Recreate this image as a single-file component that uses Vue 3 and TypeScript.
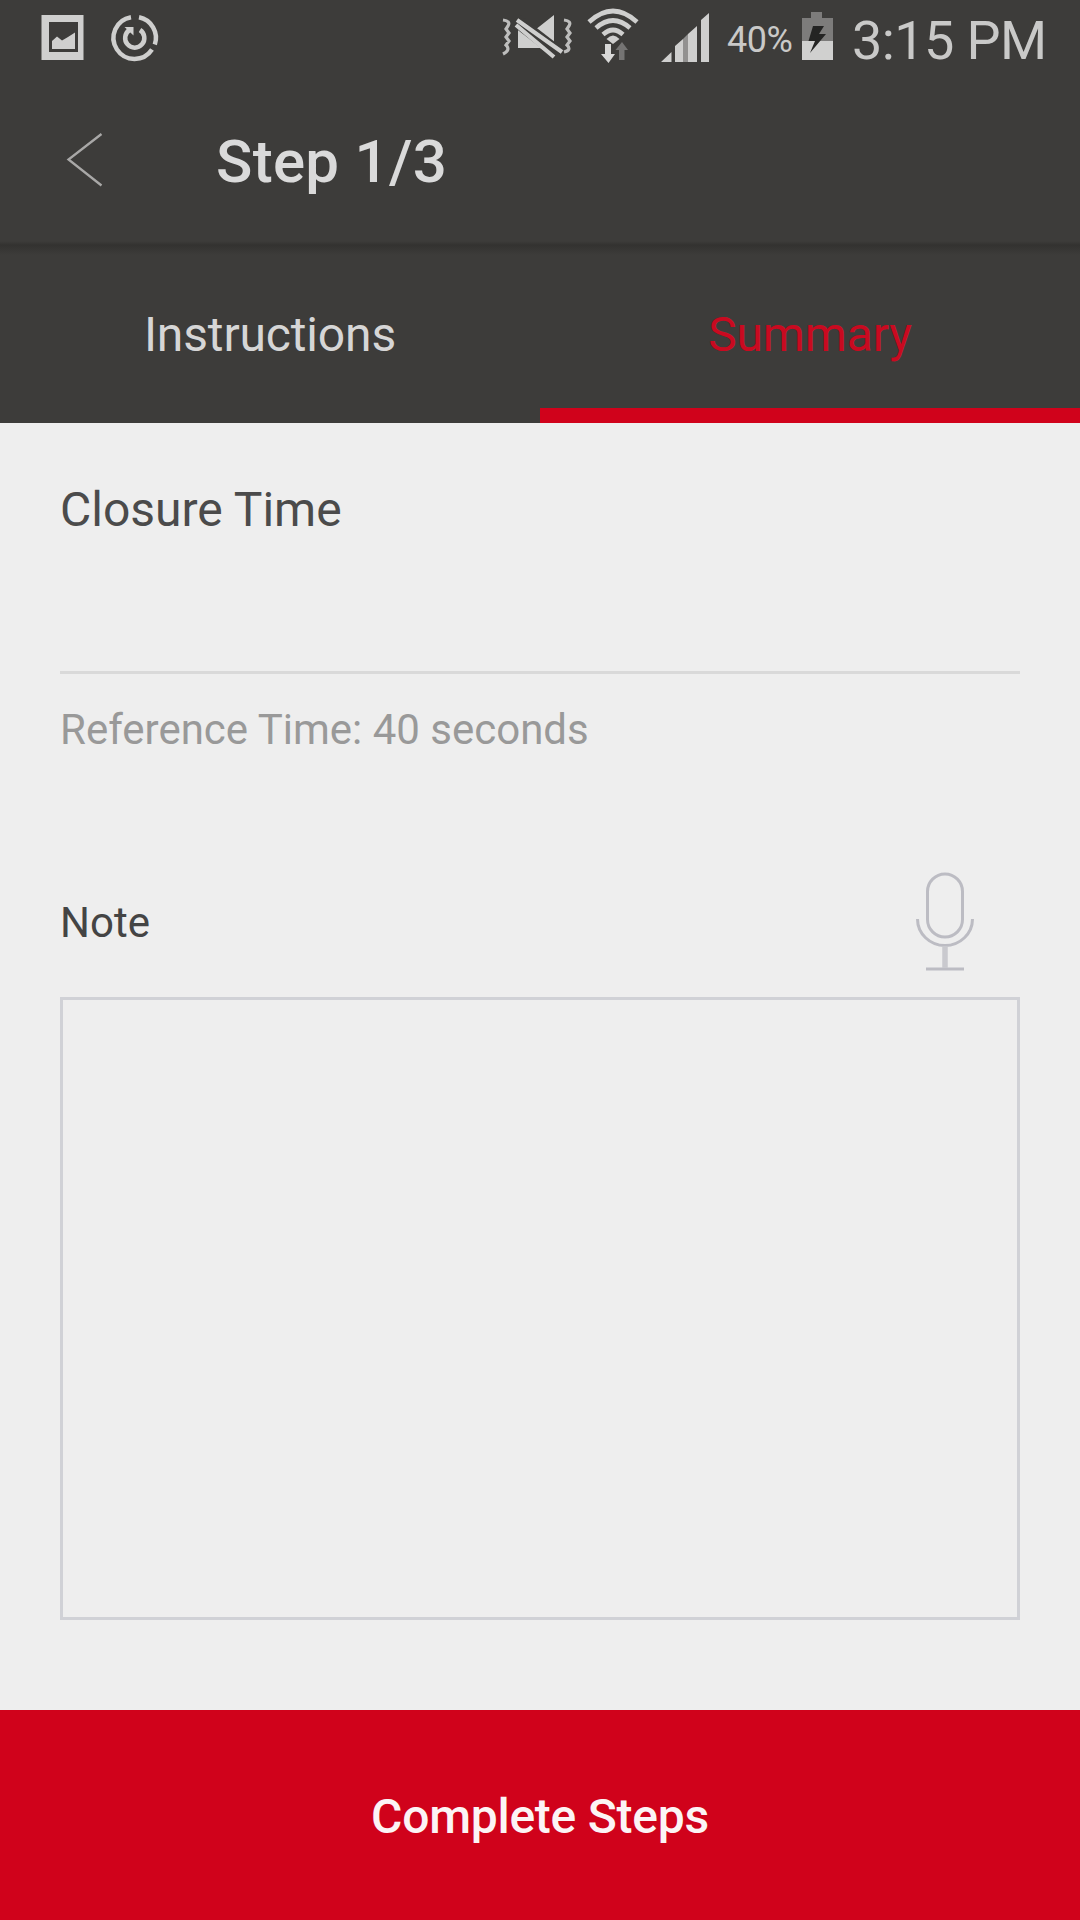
<script setup lang="ts">
import { ref } from 'vue'

const tabs = ['Instructions', 'Summary']
const activeTab = ref('Summary')
const closureTime = ref('')
const note = ref('')
</script>

<template>
  <main class="screen">
    <div class="status-bar">
      <svg class="image-icon" width="54" height="80" viewBox="36 0 54 80">
        <path fill="#cfcfce" fill-rule="evenodd" d="M41.500 15H83.500V60H41.500ZM49 22V52H78V22Z" />
        <path fill="#cfcfce" d="M52 49V41L57 36.500L62 40.500L68 37L75 32.500V49Z" />
      </svg>
      <svg class="sync-icon" width="58" height="80" viewBox="106 0 58 80" fill="none" stroke="#cfcfce">
        <path stroke-width="4.500" d="M139 17.200A21 21 0 0 1 154.800 44.500M152 49.500A21 21 0 1 1 131 17.200" />
        <path stroke-width="4.500" d="M129.500 30A9.600 9.600 0 1 0 140 30" />
        <path fill="#cfcfce" stroke="none" d="M124.500 27H133.500V35.500Z" />
      </svg>

      <svg class="mute-icon" width="80" height="80" viewBox="498 0 80 80" fill="none">
        <path fill="#cfcfce" d="M518 30H535L554 15V57L540 48H518Z" />
        <path stroke="#3d3c3a" stroke-width="13" d="M515 19.500L559 53.500" />
        <path stroke="#cfcfce" stroke-width="4.200" d="M517 20L562 52M516 25L554 57" />
        <path stroke="#bdbdbc" stroke-width="3.200" d="M503 20Q511 21 508 26L506 29L509 33L506 37L509 41L506 45Q511 50 503 54M564 20Q572 21 569 26L567 29L570 33L567 37L570 41L567 45Q572 50 564 52" />
      </svg>
      <svg class="wifi-icon" width="58" height="80" viewBox="584 0 58 80" fill="none" stroke="#cfcfce">
        <path stroke-width="4.600" d="M589 22Q613 0 637 22M596 28Q613 13 630 28M603 34.500Q613 25.500 623 34.500" />
        <path fill="#cfcfce" stroke="none" d="M606.500 39Q613 32 619.500 39L613 44Z" />
        <path fill="#d8d8d7" stroke="none" d="M605 44H611V54H615L608.500 63L601 54H605Z" />
        <path fill="#757473" stroke="none" d="M619 60V50H615.500L622 42L628 50H624.500V60Z" />
      </svg>
      <svg class="signal-icon" width="58" height="80" viewBox="656 0 58 80" fill="#cfcfce">
        <path d="M661 62L671.500 52V62ZM675 62V46L683 39V62ZM688 62V34L697 26V62ZM701 62V20L709 13V62Z" />
        <path fill="#929190" d="M683 62V39L688 34V62Z" />
      </svg>
      <span class="percent">40%</span>
      <svg class="battery-icon" width="40" height="80" viewBox="798 0 40 80">
        <path fill="#7d7c7b" d="M802 18H811V12H822V18H833V41H802Z" />
        <path fill="#d0d0cf" d="M802 41H833V60H802Z" />
        <path fill="#242423" d="M813 26H824L819 34H826L810 53L815 41H808.500Z" />
      </svg>
      <time class="clock">3:15 PM</time>
    </div>

    <header class="app-bar">
      <button class="back" aria-label="Back">
        <svg width="50" height="70" viewBox="60 125 50 70" fill="none">
          <path d="M101.500 134L68.500 159.500L101.500 185.500" stroke="#a9a8a7" stroke-width="2.300" />
        </svg>
      </button>
      <h1>Step 1/3</h1>
    </header>

    <nav class="tabs">
      <button
        v-for="tab in tabs"
        :key="tab"
        class="tab"
        :class="{ active: tab === activeTab }"
        @click="activeTab = tab"
      >
        {{ tab }}
      </button>
    </nav>

    <section class="content">
      <label class="closure" for="closure-time">Closure Time</label>
      <input id="closure-time" v-model="closureTime" class="time-input" />
      <p class="hint">Reference Time: 40 seconds</p>
      <div class="note-row">
        <label for="note">Note</label>
        <svg width="70" height="110" viewBox="910 865 70 110" fill="none" stroke="#bcbcc3" stroke-width="3">
          <rect x="927.500" y="874" width="35" height="63" rx="17.500" />
          <path d="M917.500 919A27.500 26.500 0 0 0 972.500 919M926 969H964" />
          <path d="M945 946V968" stroke="#c9c9ce" stroke-width="5.500" />
        </svg>
      </div>
      <textarea id="note" v-model="note" class="note-box"></textarea>
    </section>

    <button class="complete">Complete Steps</button>
  </main>
</template>

<style>
body {
  margin: 0;
}
</style>

<style scoped>
.screen {
  display: flex;
  flex-direction: column;
  width: 1080px;
  height: 1920px;
  overflow: hidden;
  background: #eeeeee;
  font-family: Roboto, "Liberation Sans", sans-serif;
}
button,
input,
textarea {
  box-sizing: border-box;
  margin: 0;
  padding: 0;
  border: 0;
  border-radius: 0;
  outline: 0;
  background: none;
  font-family: inherit;
}
svg {
  display: block;
  flex: none;
}
.status-bar {
  display: flex;
  flex: none;
  height: 80px;
  background: #3d3c3a;
  color: #c9c9c8;
  white-space: nowrap;
}
.image-icon {
  margin-left: 36px;
}
.sync-icon {
  margin-left: 16px;
}
.mute-icon {
  margin-left: 334px;
}
.wifi-icon {
  margin-left: 6px;
}
.signal-icon {
  margin-left: 14px;
}
.percent {
  width: 71px;
  margin-left: 13px;
  font-size: 36px;
  line-height: 81px;
  letter-spacing: -0.5px;
}
.clock {
  margin-left: 14px;
  font-size: 54px;
  line-height: 82px;
  letter-spacing: -0.6px;
}
.app-bar {
  display: flex;
  flex: none;
  height: 165px;
  background: linear-gradient(#3d3c3a 161px, #333230 165px);
}
.back {
  width: 50px;
  height: 70px;
  margin: 45px 0 0 60px;
}
h1 {
  margin: 0 0 0 106px;
  color: #dadada;
  font-size: 60px;
  font-weight: 500;
  line-height: 163px;
  letter-spacing: 0.3px;
}
.tabs {
  display: flex;
  flex: none;
  height: 178px;
  background: linear-gradient(#333230, #3d3c3a 10px);
}
.tab {
  flex: 1;
  padding-top: 17px;
  border-bottom: 15px solid transparent;
  color: #d6d6d6;
  font-size: 48px;
  line-height: 146px;
  letter-spacing: -0.15px;
}
.tab.active {
  border-bottom-color: #d0021b;
  color: #c90a20;
}
.content {
  display: flex;
  flex: 1;
  flex-direction: column;
  padding: 57px 60px 0;
}
.closure {
  height: 60px;
  color: #4b4b4b;
  font-size: 48px;
  line-height: 60px;
}
.time-input {
  width: 960px;
  height: 134px;
  border-bottom: 3px solid #d9d9d9;
  font-size: 48px;
}
.hint {
  margin: 26px 0 0;
  color: #999999;
  font-size: 42px;
  line-height: 60px;
}
.note-row {
  display: flex;
  justify-content: space-between;
  height: 110px;
  margin: 105px 40px 22px 0;
  color: #444444;
  font-size: 42px;
  line-height: 115px;
}
.note-box {
  width: 960px;
  height: 623px;
  border: 3px solid #d0d1d6;
  resize: none;
  font-size: 42px;
}
.complete {
  flex: none;
  height: 210px;
  padding-top: 3px;
  background: #d0021b;
  color: #fcf4f5;
  font-size: 48px;
  font-weight: 500;
  letter-spacing: -0.25px;
}
</style>
